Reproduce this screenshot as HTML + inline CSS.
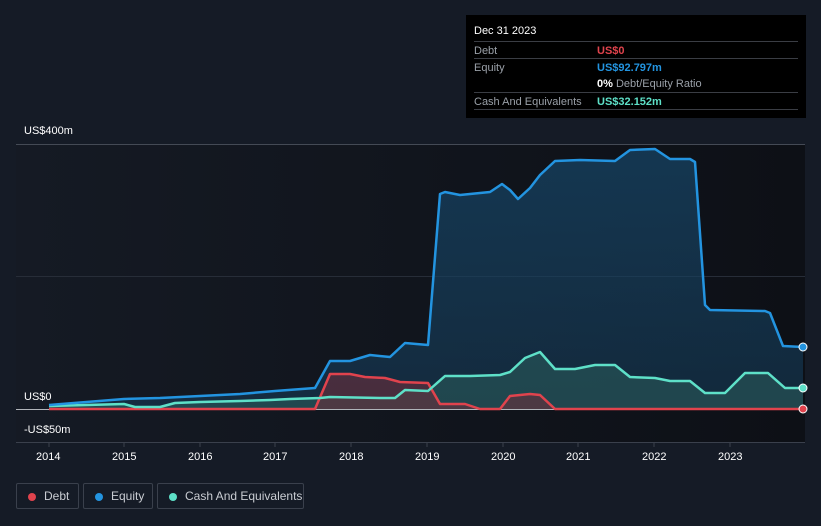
<!DOCTYPE html>
<html><head><meta charset="utf-8"><style>
body{margin:0;width:821px;height:526px;background:#151b26;font-family:"Liberation Sans",sans-serif;overflow:hidden;position:relative}
.lbl{position:absolute;color:#fff;font-size:11px}
.tip{position:absolute;left:466px;top:15px;width:340px;height:103px;background:#000;}
.tip .h{position:absolute;left:8px;top:10px;color:#fff;font-size:11px}
.row{position:absolute;left:8px;width:324px;border-top:1px solid #3a3d44;height:17px;font-size:11px;color:#9aa0a8}
.row span{position:absolute;left:123px;top:3px;font-weight:bold}
.row i{position:absolute;left:0;top:3px;font-style:normal}
.leg{position:absolute;top:483px;height:26px;border:1px solid #3a404c;border-radius:2px;color:#c9ccd2;font-size:12px;box-sizing:border-box}
.leg b{position:absolute;left:11px;top:9px;width:8px;height:8px;border-radius:50%}
.leg span{position:absolute;left:27px;top:5px}
path{stroke-linejoin:round}
</style></head><body>
<svg width="821" height="526" style="position:absolute;left:0;top:0">
<defs>
<linearGradient id="bg" x1="0" x2="1" y1="0" y2="0"><stop offset="0" stop-color="#151a24"/><stop offset="1" stop-color="#0d1016"/></linearGradient>
<linearGradient id="eq" x1="0" x2="0" y1="0" y2="1"><stop offset="0" stop-color="#16405f" stop-opacity=".8"/><stop offset="1" stop-color="#16405f" stop-opacity=".5"/></linearGradient>
</defs>
<rect x="16" y="144" width="789" height="298" fill="url(#bg)"/>
<line x1="16" y1="144.5" x2="805" y2="144.5" stroke="#444a55"/>
<line x1="16" y1="276.5" x2="805" y2="276.5" stroke="#272d38"/>
<line x1="16" y1="442.5" x2="805" y2="442.5" stroke="#3a404c"/>
<g stroke="#3a404c"><line x1="49" y1="442" x2="49" y2="447"/><line x1="124" y1="442" x2="124" y2="447"/><line x1="200" y1="442" x2="200" y2="447"/><line x1="275" y1="442" x2="275" y2="447"/><line x1="351" y1="442" x2="351" y2="447"/><line x1="427" y1="442" x2="427" y2="447"/><line x1="503" y1="442" x2="503" y2="447"/><line x1="578" y1="442" x2="578" y2="447"/><line x1="654" y1="442" x2="654" y2="447"/><line x1="730" y1="442" x2="730" y2="447"/></g>
<path d="M49,405 L124,399 L160,398 L200,396 L240,394 L275,391 L315,388 L330,361 L350,361 L370,355 L390,357 L405,343 L428,345 L440,194 L445,192 L460,195 L490,192 L502,184 L510,190 L518,199 L530,188 L540,175 L555,161 L580,160 L615,161 L630,150 L655,149 L670,159 L690,159 L695,162 L705,305 L710,310 L765,311 L770,313 L783,346 L803,347 L803,409 L49,409Z" fill="url(#eq)"/>
<path d="M49,406 L124,404 L135,407 L160,407 L175,403 L200,402 L240,401 L270,400 L290,399 L320,398 L330,397 L380,398 L395,398 L405,390 L428,391 L445,376 L470,376 L500,375 L510,372 L525,358 L540,352 L555,369 L575,369 L595,365 L615,365 L630,377 L655,378 L670,381 L690,381 L705,393 L725,393 L745,373 L768,373 L785,388 L803,388 L803,409 L49,409Z" fill="#2a5a5a" fill-opacity=".6"/>
<path d="M315,409 L330,374 L350,374 L365,377 L385,378 L400,382 L428,383 L440,404 L465,404 L480,409 L500,409 L510,396 L530,394 L540,395 L555,409Z" fill="#6a2f3c" fill-opacity=".6"/>
<line x1="16" y1="409.5" x2="805" y2="409.5" stroke="#b0b4ba"/>
<path d="M49,409 L315,409 L330,374 L350,374 L365,377 L385,378 L400,382 L428,383 L440,404 L465,404 L480,409 L500,409 L510,396 L530,394 L540,395 L555,409 L803,409" fill="none" stroke="#e0434d" stroke-width="2.5"/>
<path d="M49,406 L124,404 L135,407 L160,407 L175,403 L200,402 L240,401 L270,400 L290,399 L320,398 L330,397 L380,398 L395,398 L405,390 L428,391 L445,376 L470,376 L500,375 L510,372 L525,358 L540,352 L555,369 L575,369 L595,365 L615,365 L630,377 L655,378 L670,381 L690,381 L705,393 L725,393 L745,373 L768,373 L785,388 L803,388" fill="none" stroke="#5ee0c8" stroke-width="2.5"/>
<path d="M49,405 L124,399 L160,398 L200,396 L240,394 L275,391 L315,388 L330,361 L350,361 L370,355 L390,357 L405,343 L428,345 L440,194 L445,192 L460,195 L490,192 L502,184 L510,190 L518,199 L530,188 L540,175 L555,161 L580,160 L615,161 L630,150 L655,149 L670,159 L690,159 L695,162 L705,305 L710,310 L765,311 L770,313 L783,346 L803,347" fill="none" stroke="#2394e0" stroke-width="2.5"/>
<circle cx="803" cy="347" r="4" fill="#2394e0" stroke="#fff"/>
<circle cx="803" cy="388" r="4" fill="#5ee0c8" stroke="#fff"/>
<circle cx="803" cy="409" r="4" fill="#e0434d" stroke="#fff"/>
</svg>
<div class="lbl" style="left:24px;top:125px">US$400m</div>
<div class="lbl" style="left:24px;top:391px">US$0</div>
<div class="lbl" style="left:24px;top:424px">-US$50m</div>
<div class="lbl" style="left:36px;top:451px">2014</div>
<div class="lbl" style="left:112px;top:451px">2015</div>
<div class="lbl" style="left:188px;top:451px">2016</div>
<div class="lbl" style="left:263px;top:451px">2017</div>
<div class="lbl" style="left:339px;top:451px">2018</div>
<div class="lbl" style="left:415px;top:451px">2019</div>
<div class="lbl" style="left:491px;top:451px">2020</div>
<div class="lbl" style="left:566px;top:451px">2021</div>
<div class="lbl" style="left:642px;top:451px">2022</div>
<div class="lbl" style="left:718px;top:451px">2023</div>
<div class="tip">
<div class="h">Dec 31 2023</div>
<div class="row" style="top:26px"><i>Debt</i><span style="color:#e0434d">US$0</span></div>
<div class="row" style="top:43px"><i>Equity</i><span style="color:#2394e0">US$92.797m</span></div>
<div class="row" style="top:60px;border-top:none"><span style="color:#fff">0% <b style="color:#9aa0a8;font-weight:normal">Debt/Equity Ratio</b></span></div>
<div class="row" style="top:77px"><i>Cash And Equivalents</i><span style="color:#5ee0c8">US$32.152m</span></div>
<div class="row" style="top:94px;height:0"></div>
</div>
<div class="leg" style="left:16px;width:63px"><b style="background:#e0434d"></b><span>Debt</span></div>
<div class="leg" style="left:83px;width:70px"><b style="background:#2394e0"></b><span>Equity</span></div>
<div class="leg" style="left:157px;width:147px"><b style="background:#5ee0c8"></b><span>Cash And Equivalents</span></div>
</body></html>
